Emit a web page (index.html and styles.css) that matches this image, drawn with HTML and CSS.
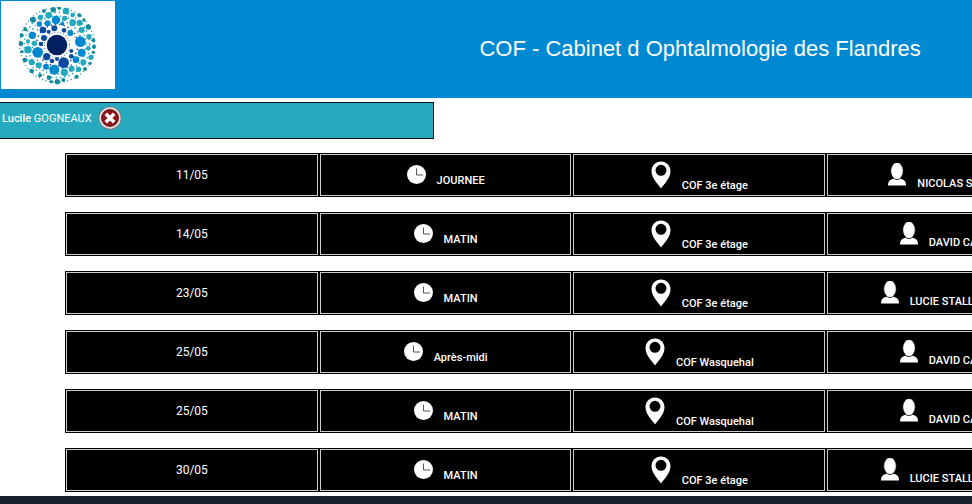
FILE: index.html
```
<!DOCTYPE html>
<html lang="fr">

<head>
    <meta charset="UTF-8">
    <meta name="viewport" content="width=device-width, initial-scale=1.0">
    <title>COF - Planning</title>
    <link rel="stylesheet" href="styles.css">
</head>

<body>
    <!-- shared icons -->
    <svg class="sprite" aria-hidden="true">
        <symbol id="clock" viewBox="0 0 19 19">
            <circle cx="9.5" cy="9.5" r="9.5" fill="#fff"/>
            <path d="M9.5 3.5V10H16" fill="none" stroke="#555" stroke-width="1"/>
        </symbol>
        <symbol id="pin" viewBox="0 0 20 28">
            <path fill="#fff" fill-rule="evenodd" d="M10 0.5C4.500 0.500 0.500 4.800 0.500 10.200C0.500 14.500 2.800 18 5.500 21.800C7.500 24.500 9 26 10 27.500C11 26 12.500 24.500 14.500 21.800C17.200 18 19.500 14.500 19.500 10.200C19.500 4.800 15.500 0.500 10 0.500ZM10 3.800A5.500 5.500 0 1 1 10 14.800A5.500 5.500 0 1 1 10 3.800Z"/>
        </symbol>
        <symbol id="person" viewBox="0 0 18 23">
            <path fill="#fff" d="M0 22.500C0 18 2 16.500 6 15.500H12C16 16.500 18 18 18 22.500Z"/>
            <ellipse cx="9" cy="8" rx="6.300" ry="8.600" fill="#fff" stroke="#000" stroke-width="0.800"/>
        </symbol>
    </svg>

    <header class="header">
        <a href="#" class="logo" aria-label="Accueil">
            <svg viewBox="0 0 342 264" aria-hidden="true">
                <g transform="translate(27 -3)">
                    <!-- small dots between the bubbles -->
                    <g fill="none" stroke-linecap="round">
                        <circle cx="141" cy="135" r="38" stroke="#0d4a9f" stroke-width="3" stroke-dasharray="0 9"/>
                        <circle cx="141" cy="135" r="62" stroke="#0d4a9f" stroke-width="5" stroke-dasharray="0 13"/>
                        <circle cx="141" cy="135" r="74" stroke="#0089d0" stroke-width="5" stroke-dasharray="0 14"/>
                        <circle cx="141" cy="135" r="87" stroke="#22a9bf" stroke-width="5" stroke-dasharray="0 12"/>
                        <circle cx="141" cy="135" r="98" stroke="#22a9bf" stroke-width="5" stroke-dasharray="0 13"/>
                        <circle cx="141" cy="135" r="112" stroke="#138a9c" stroke-width="4" stroke-dasharray="0 11"/>
                    </g>
                    <circle cx="141" cy="135" r="31" fill="#00205f"/>
                    <g fill="#0d4a9f">
                        <circle cx="161" cy="188" r="16"/><circle cx="99" cy="90" r="10"/>
                        <circle cx="133" cy="85" r="9"/><circle cx="102" cy="114" r="9"/>
                        <circle cx="162" cy="91" r="7"/><circle cx="110" cy="170" r="11"/>
                        <circle cx="184" cy="169" r="7"/><circle cx="93" cy="132" r="7"/>
                        <circle cx="184" cy="153" r="6"/><circle cx="126" cy="183" r="7"/>
                        <circle cx="116" cy="95" r="6"/><circle cx="141" cy="177" r="6"/>
                    </g>
                    <g fill="#0089d0">
                        <circle cx="211" cy="125" r="16"/><circle cx="83" cy="157" r="16"/>
                        <circle cx="133" cy="209" r="15"/><circle cx="138" cy="60" r="13"/>
                        <circle cx="67" cy="106" r="11"/><circle cx="215" cy="158" r="12"/>
                        <circle cx="113" cy="70" r="9"/><circle cx="88" cy="72" r="8"/>
                        <circle cx="181" cy="99" r="9"/><circle cx="198" cy="179" r="10"/>
                        <circle cx="108" cy="200" r="9"/><circle cx="157" cy="71" r="6"/>
                    </g>
                    <g fill="#22a9bf">
                        <circle cx="116" cy="46" r="10"/><circle cx="168" cy="33" r="10"/>
                        <circle cx="164" cy="55" r="8"/><circle cx="188" cy="68" r="10"/>
                        <circle cx="209" cy="68" r="9"/><circle cx="54" cy="149" r="11"/>
                        <circle cx="65" cy="187" r="9"/><circle cx="163" cy="217" r="11"/>
                        <circle cx="185" cy="206" r="9"/><circle cx="220" cy="187" r="9"/>
                        <circle cx="206" cy="208" r="8"/><circle cx="243" cy="172" r="8"/>
                        <circle cx="237" cy="110" r="8"/><circle cx="86" cy="196" r="9"/>
                        <circle cx="215" cy="90" r="9"/><circle cx="54" cy="124" r="6"/>
                        <circle cx="91" cy="52" r="8"/><circle cx="73" cy="130" r="8"/>
                        <circle cx="235" cy="145" r="7"/><circle cx="188" cy="45" r="7"/>
                    </g>
                    <g fill="#138a9c">
                        <circle cx="130" cy="29" r="8"/><circle cx="148" cy="25" r="5"/>
                        <circle cx="69" cy="59" r="9"/><circle cx="208" cy="46" r="6"/>
                        <circle cx="235" cy="81" r="8"/><circle cx="250" cy="121" r="6"/>
                        <circle cx="252" cy="140" r="6"/><circle cx="250" cy="157" r="5"/>
                        <circle cx="225" cy="207" r="6"/><circle cx="142" cy="245" r="8"/>
                        <circle cx="124" cy="245" r="5"/><circle cx="160" cy="240" r="6"/>
                        <circle cx="117" cy="233" r="7"/><circle cx="90" cy="226" r="6"/>
                        <circle cx="65" cy="213" r="7"/><circle cx="45" cy="180" r="7"/>
                        <circle cx="33" cy="131" r="7"/><circle cx="35" cy="106" r="6"/>
                        <circle cx="46" cy="88" r="6"/><circle cx="102" cy="33" r="6"/>
                        <circle cx="200" cy="230" r="6"/><circle cx="240" cy="190" r="5"/>
                        <circle cx="36" cy="155" r="5"/><circle cx="222" cy="60" r="5"/>
                    </g>
                </g>
            </svg>
        </a>
        <h1 class="title">COF - Cabinet d Ophtalmologie des Flandres</h1>
    </header>

    <div class="user">
        <span><span class="firstname">Lucile</span> GOGNEAUX</span>
        <button type="button" class="logout" aria-label="Déconnexion">
            <svg viewBox="0 0 24 24">
                <circle cx="12" cy="12" r="11.500" fill="#777"/>
                <circle cx="12" cy="12" r="10.700" fill="#e4e0e0"/>
                <circle cx="12" cy="12" r="8.500" fill="#8e1519" stroke="#5a1012" stroke-width="0.800"/>
                <path d="M7.800 7.800L16.200 16.200M16.200 7.800L7.800 16.200" stroke="#fff" stroke-width="3.600"/>
            </svg>
        </button>
    </div>

    <main>
        <table class="planning">
            <tbody>
                <tr>
                    <td>11/05</td>
                    <td class="period"><svg><use href="#clock"/></svg>JOURNEE</td>
                    <td class="place"><svg><use href="#pin"/></svg>COF 3e étage</td>
                    <td class="name"><svg><use href="#person"/></svg>NICOLAS SALEMBIE</td>
                </tr>
                <tr>
                    <td>14/05</td>
                    <td class="period"><svg><use href="#clock"/></svg>MATIN</td>
                    <td class="place"><svg><use href="#pin"/></svg>COF 3e étage</td>
                    <td class="name"><svg><use href="#person"/></svg>DAVID CARLIER</td>
                </tr>
                <tr>
                    <td>23/05</td>
                    <td class="period"><svg><use href="#clock"/></svg>MATIN</td>
                    <td class="place"><svg><use href="#pin"/></svg>COF 3e étage</td>
                    <td class="name"><svg><use href="#person"/></svg>LUCIE STALLAERTMAN</td>
                </tr>
                <tr>
                    <td>25/05</td>
                    <td class="period"><svg><use href="#clock"/></svg>Après-midi</td>
                    <td class="place"><svg><use href="#pin"/></svg>COF Wasquehal</td>
                    <td class="name"><svg><use href="#person"/></svg>DAVID CARLIER</td>
                </tr>
                <tr>
                    <td>25/05</td>
                    <td class="period"><svg><use href="#clock"/></svg>MATIN</td>
                    <td class="place"><svg><use href="#pin"/></svg>COF Wasquehal</td>
                    <td class="name"><svg><use href="#person"/></svg>DAVID CARLIER</td>
                </tr>
                <tr>
                    <td>30/05</td>
                    <td class="period"><svg><use href="#clock"/></svg>MATIN</td>
                    <td class="place"><svg><use href="#pin"/></svg>COF 3e étage</td>
                    <td class="name"><svg><use href="#person"/></svg>LUCIE STALLAERTMAN</td>
                </tr>
            </tbody>
        </table>
    </main>

    <footer class="footer"></footer>
</body>

</html>
```
FILE: styles.css
```
* {
    margin: 0;
    padding: 0;
    box-sizing: border-box;
}

body {
    font-family: Roboto, "Liberation Sans", sans-serif;
    font-size: 12px;
    background: #fff;
    overflow-x: hidden;
}

.sprite {
    display: none;
}

.header {
    display: flex;
    align-items: flex-start;
    padding: 1px 0 9px 1px;
    background: #0089d3;
}

.logo {
    width: 114px;
    background: #fff;
}

.logo svg {
    display: block;
}

.title {
    width: 56%;
    margin-left: auto;
    padding-top: 8px;
    align-self: center;
    text-align: center;
    font-family: "Liberation Sans", sans-serif;
    font-size: 22px;
    font-weight: normal;
    color: #fff;
}

.user {
    display: flex;
    align-items: flex-start;
    gap: 6px;
    width: 45%;
    margin: 4px 0 14px -3px;
    padding: 3px 4px 7px;
    border: 1px solid #111;
    background: #27aabf;
    color: #fff;
    font-size: 11px;
    line-height: 25px;
}

.firstname {
    font-weight: 500;
}

.logout {
    border: none;
    background: none;
    cursor: pointer;
}

.logout svg {
    display: block;
    width: 24px;
    height: 24px;
}

.planning {
    display: block;
    margin-left: 65px;
}

.planning tbody {
    display: block;
}

.planning tr {
    display: grid;
    grid-template-columns: repeat(4, 25.9vw);
    gap: 2px;
    width: max-content;
    margin-bottom: 15px;
    padding: 1px;
    background: #000;
}

.planning tr:last-child {
    margin-bottom: 4px;
}

.planning td {
    display: flex;
    justify-content: center;
    align-items: center;
    height: 42px;
    border: 1px solid #ccc;
    color: #fff;
}

.planning .period,
.planning .place,
.planning .name {
    align-items: flex-end;
    gap: 11px;
    font-size: 11px;
    font-weight: 500;
}

.planning .period {
    padding-bottom: 8px;
}

.planning .place {
    padding-bottom: 3px;
}

.planning .name {
    padding-bottom: 5px;
}

.period svg {
    width: 19px;
    height: 19px;
    margin-bottom: 3px;
}

.place svg {
    width: 20px;
    height: 28px;
    margin-bottom: 3px;
}

.name svg {
    width: 18px;
    height: 23px;
    margin-bottom: 4px;
}

.footer {
    height: 8px;
    background: #1a212e;
}
```
